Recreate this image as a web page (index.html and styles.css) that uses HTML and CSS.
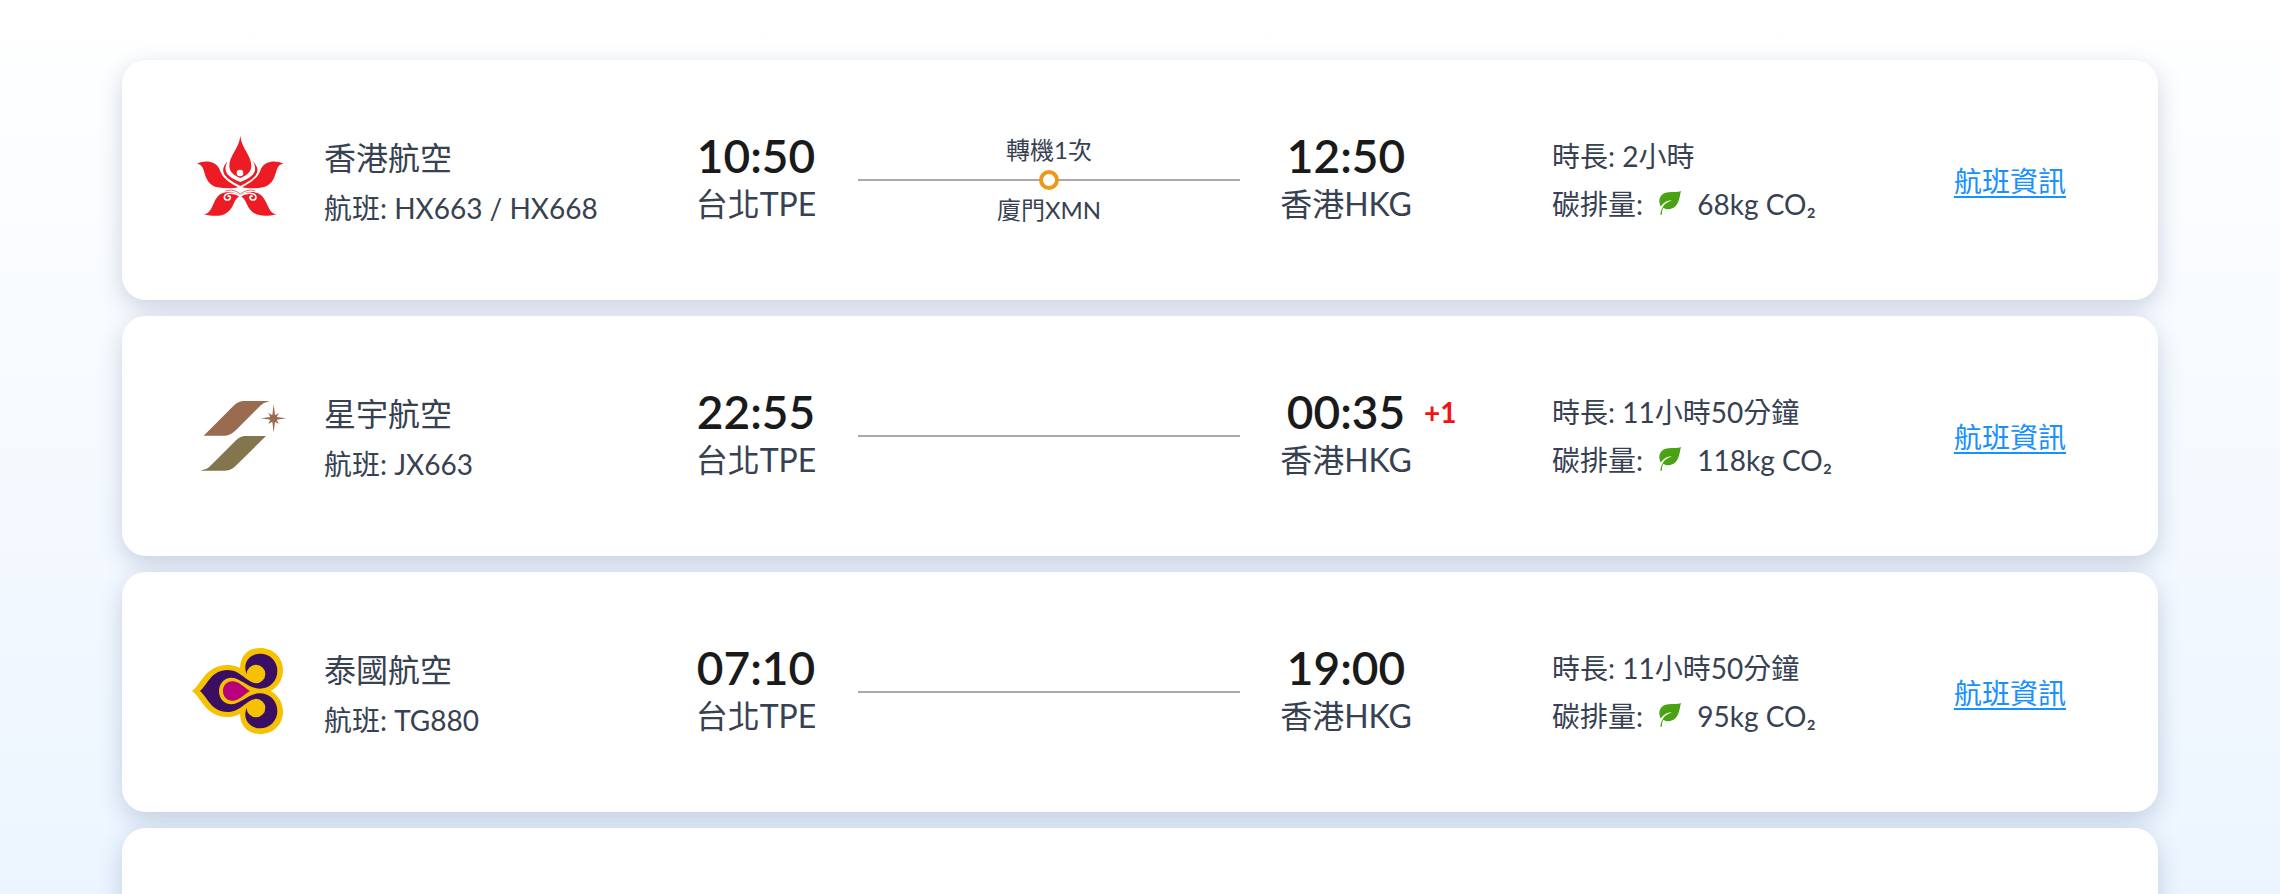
FILE: index.html
```html
<!DOCTYPE html>
<html lang="zh-Hant">
<head>
<meta charset="UTF-8">
<meta name="viewport" content="width=device-width, initial-scale=1.0">
<title>航班資訊</title>
<link rel="stylesheet" href="styles.css">
</head>
<body>
<svg class="defs" aria-hidden="true">
  <symbol id="leaf" viewBox="0 0 66 72">
    <path fill="#4aa312" d="M66 0C62 12 62 50 33 54C24 56 17 53 13 50C9 57 9 64 8 72L4 71C5 58 10 47 18 39C25 33 33 31 38 28C27 28 14 34 5 47C-4 28 2 11 20 5C36 0 52 6 66 0Z"/>
  </symbol>
</svg>
<main class="flight-list">
  <article class="card">
    <div class="airline">
      <svg class="logo" viewBox="36 36 288 288" aria-hidden="true">
        <g fill="#ed1c24">
          <path d="M181 47C184 84 214 106 214 137C214 157 198 167 181 174C164 167 148 157 148 137C148 106 178 84 181 47Z"/>
          <path d="M143 124C118 150 126 172 181 198C236 172 244 150 219 124C234 152 224 170 181 186C138 170 128 152 143 124Z"/>
          <path id="petal" d="M51 131C74 120 106 122 118 146C126 170 138 182 174 202C158 206 134 206 112 202C78 194 76 163 69 145C65 136 59 132 51 131Z"/>
          <path id="foot" d="M71 283C90 281 94 264 102 248C112 226 124 216 146 216C162 216 172 221 181 226C172 233 166 239 161 251C148 283 122 295 71 283Z"/>
          <use href="#petal" transform="matrix(-1 0 0 1 361 0)"/>
          <use href="#foot" transform="matrix(-1 0 0 1 361 0)"/>
        </g>
        <circle cx="180" cy="159" r="10" fill="#fff"/>
        <g fill="none" stroke="#fff" stroke-width="5">
          <path id="curl" d="M180 228C166 217 135 216 133 231C132 243 152 243 151 231C150 227 145 227 144 230"/>
          <use href="#curl" transform="matrix(-1 0 0 1 361 0)"/>
        </g>
        <path fill="none" stroke="#ed1c24" stroke-width="2" d="M136 213C156 206 170 214 181 222C192 214 206 206 226 213"/>
      </svg>
      <div class="airline-text">
        <h2 class="name">香港航空</h2>
        <p class="text">航班: HX663 / HX668</p>
      </div>
    </div>
    <div class="stop">
      <time class="time">10:50</time>
      <p class="place">台北TPE</p>
    </div>
    <div class="route">
      <p class="note">轉機1次</p>
      <div class="line"><span class="dot"></span></div>
      <p class="note">廈門XMN</p>
    </div>
    <div class="stop">
      <time class="time">12:50</time>
      <p class="place">香港HKG</p>
    </div>
    <div class="info">
      <p class="text">時長: 2小時</p>
      <p class="text">碳排量: <svg class="leaf" aria-hidden="true"><use href="#leaf"/></svg> 68kg CO₂</p>
    </div>
    <a class="more" href="#">航班資訊</a>
  </article>

  <article class="card">
    <div class="airline">
      <svg class="logo" viewBox="36 24 288 288" aria-hidden="true">
        <g fill="#9a6b4f">
          <path d="M71 167L160 78C172 66 182 63 195 63H270C255 66 248 71 238 80L172 146C160 158 148 167 134 167Z"/>
          <path d="M281 72L285 106L296 99L290 111L319 115L290 119L296 132L285 125L281 158L277 125L265 132L271 119L243 115L271 111L265 99L277 106Z"/>
          <circle cx="281" cy="115" r="11"/>
        </g>
        <path fill="#85754e" d="M61 272C80 268 84 265 96 253L160 189C172 176 182 168 198 168H258L172 253C160 266 150 272 134 272Z"/>
      </svg>
      <div class="airline-text">
        <h2 class="name">星宇航空</h2>
        <p class="text">航班: JX663</p>
      </div>
    </div>
    <div class="stop">
      <time class="time">22:55</time>
      <p class="place">台北TPE</p>
    </div>
    <div class="route">
      <div class="line"></div>
    </div>
    <div class="stop">
      <time class="time">00:35</time>
      <span class="plus">+1</span>
      <p class="place">香港HKG</p>
    </div>
    <div class="info">
      <p class="text">時長: 11小時50分鐘</p>
      <p class="text">碳排量: <svg class="leaf" aria-hidden="true"><use href="#leaf"/></svg> 118kg CO₂</p>
    </div>
    <a class="more" href="#">航班資訊</a>
  </article>

  <article class="card">
    <div class="airline">
      <svg class="logo" viewBox="36 27 288 288" aria-hidden="true">
        <path fill="#f6c100" d="M36 168C62 152 76 90 142 90C160 90 172 95 180 99C182 60 205 39 241 39C280 39 309 68 309 105C309 135 292 158 272 168C292 178 309 201 309 231C309 268 280 297 241 297C205 297 182 276 180 237C172 241 160 246 142 246C76 246 62 184 36 168Z"/>
        <g fill="#3a0f63">
          <path id="arm" d="M60 168C82 150 94 105 142 105C182 105 197 140 228 145A28 28 0 1 0 200 117C186 82 210 56 241 56A51 51 0 0 1 292 108C292 140 268 161 238 161C205 161 185 130 155 130V169Z"/>
          <use href="#arm" transform="matrix(1 0 0 -1 0 336)"/>
        </g>
        <path fill="#f6c100" d="M224 168C195 160 180 128 155 128C132 128 117 146 117 168C117 190 132 208 155 208C180 208 195 176 224 168Z"/>
        <path fill="#b8007c" d="M210 168C190 157 178 139 157 139C140 139 129 152 129 168C129 184 140 197 157 197C178 197 190 179 210 168Z"/>
      </svg>
      <div class="airline-text">
        <h2 class="name">泰國航空</h2>
        <p class="text">航班: TG880</p>
      </div>
    </div>
    <div class="stop">
      <time class="time">07:10</time>
      <p class="place">台北TPE</p>
    </div>
    <div class="route">
      <div class="line"></div>
    </div>
    <div class="stop">
      <time class="time">19:00</time>
      <p class="place">香港HKG</p>
    </div>
    <div class="info">
      <p class="text">時長: 11小時50分鐘</p>
      <p class="text">碳排量: <svg class="leaf" aria-hidden="true"><use href="#leaf"/></svg> 95kg CO₂</p>
    </div>
    <a class="more" href="#">航班資訊</a>
  </article>

  <article class="card"></article>
</main>
</body>
</html>
```
FILE: styles.css
```css
* {
  box-sizing: border-box;
}
body {
  margin: 0;
  font-family: Lato, "Noto Sans CJK TC", sans-serif;
  color: #374151;
}
h2, p {
  margin: 0;
  font-weight: 400;
}
.defs {
  position: absolute;
  width: 0;
  height: 0;
}
.flight-list {
  display: flex;
  flex-direction: column;
  gap: 16px;
  height: 100vh;
  padding: 60px 122px 0;
  overflow: hidden;
  background: linear-gradient(#ffffff, #ecf5ff);
}
.card {
  display: grid;
  grid-template-columns: 502px 124px minmax(240px, 1fr) 132px 542px 112px;
  flex-shrink: 0;
  align-items: center;
  min-height: 240px;
  padding: 0 92px 0 70px;
  border-radius: 24px;
  background-color: #fff;
  box-shadow: 0 8px 24px rgba(40, 70, 120, 0.22);
}
.airline {
  display: flex;
  align-items: center;
  gap: 36px;
}
.airline-text {
  padding-top: 4px;
}
.logo {
  width: 96px;
  height: 96px;
}
.name {
  font-size: 32px;
  line-height: 52px;
}
.text {
  font-size: 28px;
  line-height: 48px;
  white-space: nowrap;
}
.stop {
  position: relative;
  text-align: center;
  white-space: nowrap;
}
.time {
  display: block;
  font-size: 46px;
  font-weight: 600;
  line-height: 48px;
  color: #1a1a1a;
}
.plus {
  position: absolute;
  top: 0;
  left: 100%;
  margin-left: 12px;
  font-size: 28px;
  font-weight: 700;
  line-height: 48px;
  color: #f01414;
}
.place {
  font-size: 32px;
  line-height: 48px;
}
.route {
  padding: 0 40px;
  text-align: center;
}
.note {
  font-size: 24px;
  line-height: 28px;
}
.line {
  display: flex;
  align-items: center;
  justify-content: center;
  height: 32px;
  background: linear-gradient(#a9a9a9, #a9a9a9) center / 100% 2px no-repeat;
}
.dot {
  width: 20px;
  height: 20px;
  border: 4px solid #ee9818;
  border-radius: 50%;
  background-color: #fff;
}
.info {
  padding-left: 140px;
}
.leaf {
  width: 24px;
  height: 24px;
  margin: 0 8px;
}
.more {
  font-size: 28px;
  color: #1890ff;
  text-underline-offset: 4px;
  white-space: nowrap;
}
```
